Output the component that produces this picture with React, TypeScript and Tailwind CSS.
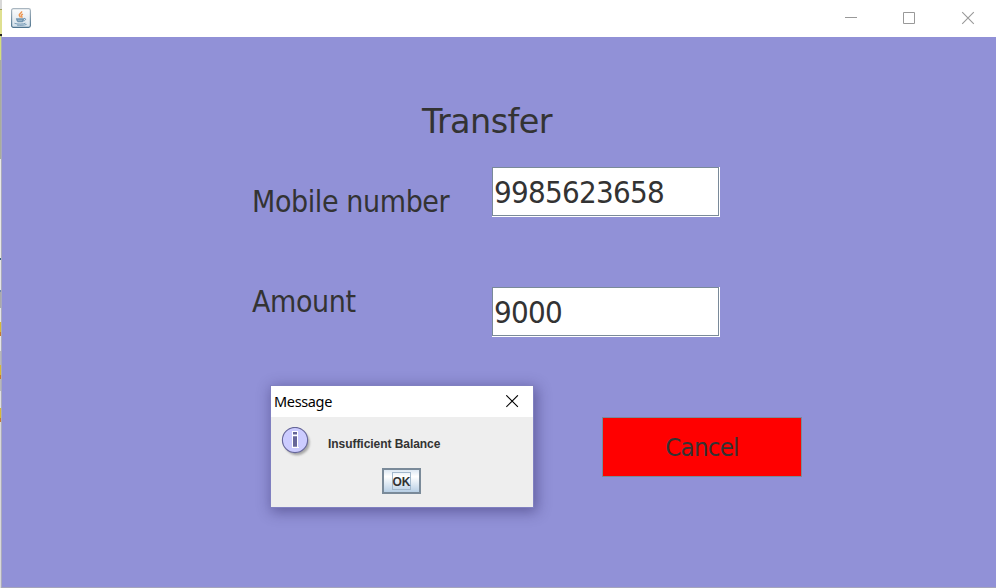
import React from "react";

const tahoma = "font-['DejaVu_Sans_Condensed','DejaVu_Sans',sans-serif] [font-stretch:condensed] text-[#333333] whitespace-pre";

function JavaIcon() {
  return (
    <svg width="20" height="20" viewBox="0 0 20 20" fill="none">
      <defs>
        <linearGradient id="tile" x1="0" y1="0" x2="0" y2="1">
          <stop offset="0" stopColor="#fbfcfd" />
          <stop offset="0.5" stopColor="#e9eef3" />
          <stop offset="1" stopColor="#d3e0ea" />
        </linearGradient>
        <linearGradient id="rim" x1="0" y1="0" x2="0" y2="1">
          <stop offset="0" stopColor="#a9b6c0" />
          <stop offset="1" stopColor="#4f748f" />
        </linearGradient>
      </defs>
      <rect x="0.6" y="0.6" width="18.8" height="18.8" rx="1.8" fill="url(#tile)" stroke="url(#rim)" strokeWidth="1.2" />
      <path d="M10.6 3.3c.7 1.5-2.5 2.4-2.4 3.8 0 .9 1 1.4 1.4 2.3M12 6.2c-1.5.6-2.2 1.3-1.2 2.3.4.5.1.9-.3 1.2" stroke="#ee9550" strokeWidth="1.4" />
      <path d="M4.9 10.2h8.3c0 1.8-.6 3.2-1.6 4H6.800c-1.100-.9-1.700-2.300-1.900-4z" fill="#7396b1" />
      <path d="M7 12.300h4" stroke="#a9c0d1" strokeWidth="0.800" />
      <path d="M13 10.400c2.100-.4 2.400 1.800-.4 2.600" stroke="#6c92af" strokeWidth="1" />
      <path d="M3.500 15.300c2.500 1.100 9.200 1 11-.1M6 17.100c3 .4 7 .3 9.600-.7" stroke="#6e94b1" strokeWidth="0.900" />
    </svg>
  );
}

function BehindStrip() {
  return (
    <div className="flex w-[2px] shrink-0 flex-col">
      <div className="h-[9px] bg-[#d8d8d8]" />
      <div className="h-px bg-[#a0a060]" />
      <div className="h-[24px] bg-[#dfe090]" />
      <div className="h-[2px] bg-[#222222]" />
      <div className="flex flex-1">
        <div className="flex w-px flex-col">
          <div className="h-[24px] bg-[#d4df7c]" />
          <div className="h-[99px] bg-[#a9ad9c]" />
          <div className="h-[99px] bg-[#e8e8e4]" />
          <div className="h-[2px] bg-[#3c6484]" />
          <div className="h-[30px] bg-[#e4e4e4]" />
          <div className="h-[2px] bg-[#7088ac]" />
          <div className="h-[16px] bg-[#aaaaaa]" />
          <div className="h-[14px] bg-[#e4e4e4]" />
          <div className="h-[10px] bg-[#d8b838]" />
          <div className="h-[4px] bg-[#c87830]" />
          <div className="h-[15px] bg-[#e4e4e4]" />
          <div className="h-[14px] bg-[#b8b8b8]" />
          <div className="h-[10px] bg-[#d8b838]" />
          <div className="h-[4px] bg-[#c87830]" />
          <div className="h-[12px] bg-[#b8b8b8]" />
          <div className="h-[17px] bg-[#e0e0e0]" />
          <div className="h-[10px] bg-[#d8b838]" />
          <div className="h-[4px] bg-[#c87830]" />
          <div className="flex-1 bg-[#d8d8d8]" />
        </div>
        <div className="w-px bg-[#aaaabb]" />
      </div>
    </div>
  );
}

function TitleBar() {
  return (
    <div className="flex h-[37px] shrink-0 items-center justify-between bg-white pl-[9px]">
      <div className="-mt-px"><JavaIcon /></div>
      <svg width="166" height="37" viewBox="0 0 166 37" fill="none" stroke="#999999">
        <path d="M15 17.5h12" />
        <path d="M73.5 12.5h11v11h-11z" />
        <path d="M132.2 12.2l11.6 11.6M143.8 12.2l-11.6 11.6" strokeWidth="1.1" />
      </svg>
    </div>
  );
}

function Field({ value }: { value: string }) {
  return (
    <div className="h-[50px] w-[228px] border-b border-r border-white">
      <div className={`h-[49px] w-[227px] border border-[#7a8a99] bg-white pl-px text-[31px] leading-[48px] tracking-[-0.75px] ${tahoma}`}>
        {value}
      </div>
    </div>
  );
}

function InfoIcon() {
  return (
    <svg width="32" height="32" viewBox="0 0 32 32">
      <defs>
        <filter id="soft" x="-30%" y="-30%" width="160%" height="160%">
          <feGaussianBlur stdDeviation="1.3" />
        </filter>
      </defs>
      <circle cx="16" cy="15.7" r="12.6" fill="#888888" opacity="0.7" filter="url(#soft)" />
      <circle cx="14" cy="13" r="12.6" fill="#ccccff" stroke="#666699" strokeWidth="1.1" />
      <path d="M11 4h6v16h1v1h-7z" fill="#ffffff" />
      <path d="M12 5h4v2.6h-4zM12 9.2h4v10.6h-4z" fill="#666699" />
    </svg>
  );
}

function MessageDialog() {
  return (
    <div className="absolute left-[270px] top-[385px] flex h-[123px] w-[264px] flex-col border border-[#8080c0] bg-[#eeeeee] shadow-[2px_3px_13px_1px_rgba(30,25,80,0.42)]">
      <div className="flex h-[31px] items-center justify-between bg-white pl-[3px] pr-[14px]">
        <span className="whitespace-pre font-['Noto_Sans',sans-serif] text-[14.5px] leading-[31px] text-black tracking-[-0.35px]">Message</span>
        <svg className="-mt-px" width="13" height="13" viewBox="0 0 13 13" stroke="#000000" strokeWidth="1.1">
          <path d="M0.3 0.3l11.6 11.6M11.9 0.3l-11.6 11.6" />
        </svg>
      </div>
      <div className="flex h-[51px] items-start pl-[10px] pt-[10px]">
        <InfoIcon />
        <span className="ml-[15px] mt-[9px] whitespace-pre font-['Liberation_Sans',sans-serif] text-[12px] font-bold leading-[16px] tracking-[-0.05px] text-[#333333]">Insufficient Balance</span>
      </div>
      <div className="flex justify-center pr-px">
        <button className="flex h-[26px] w-[39px] items-center justify-center border-2 border-[#7a8a99] bg-linear-to-b from-[#dde8f3] via-white via-30% to-[#b8cfe5]">
          <span className="flex h-[18px] w-[19px] items-center justify-center border border-[#a3b8cc] pt-[2px] font-['Liberation_Sans',sans-serif] text-[12px] font-bold leading-[16px] text-[#333333]">OK</span>
        </button>
      </div>
    </div>
  );
}

export default function App() {
  return (
    <div className="relative flex h-[588px] w-[996px] overflow-hidden">
      <BehindStrip />
      <div className="flex flex-1 flex-col">
        <TitleBar />
        <main className="flex-1 border-b border-[#a5a5bc] bg-[#9191d7] pl-[250px]">
          <h1 className="ml-[170px] whitespace-pre pt-[64px] font-['DejaVu_Sans',sans-serif] text-[33.5px] leading-[41px] tracking-[-0.6px] text-[#333333]">Transfer</h1>
          <div className="mt-[25px] flex h-[120px]">
            <div className={`w-[240px] pt-[15px] text-[30px] leading-[40px] tracking-[-0.4px] ${tahoma}`}>Mobile number</div>
            <Field value="9985623658" />
          </div>
          <div className="flex h-[130px]">
            <div className={`w-[240px] -mt-[5px] text-[30px] leading-[40px] tracking-[-0.4px] ${tahoma}`}>Amount</div>
            <Field value="9000" />
          </div>
          <button className={`ml-[350px] flex h-[60px] w-[200px] items-center justify-center border border-[#7a8a99] bg-[#ff0000] text-[25.5px] leading-[40px] tracking-[-0.7px] ${tahoma}`}>
            Cancel
          </button>
        </main>
      </div>
      <MessageDialog />
    </div>
  );
}
